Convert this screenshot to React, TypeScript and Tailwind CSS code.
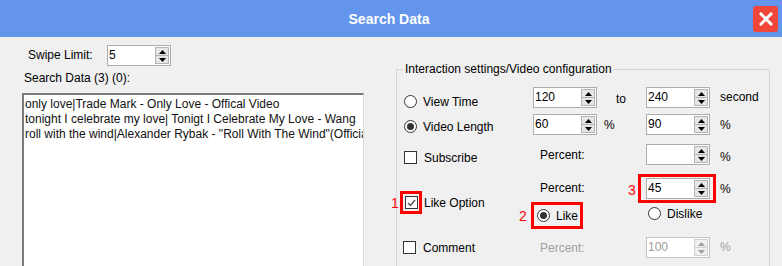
import React from 'react';

const font = "font-['Liberation_Sans',Arial,sans-serif]";

const Spinner = ({ value, disabled }: { value: string; disabled?: boolean }) => {
  return (
    <div className={`w-[64px] h-[21px] flex bg-white border ${disabled ? 'border-[#c4c4c4]' : 'border-[#acacac]'}`}>
      <div className={`flex-1 pl-[1px] text-[12px] leading-[18px] ${disabled ? 'text-[#9d9d9d]' : 'text-black'}`}>{value}</div>
      <div className={`w-[14px] my-[1px] mr-[1px] flex flex-col border ${disabled ? 'border-[#d0d0d0] bg-[#f0f0f0]' : 'border-[#b4b4b4] bg-[#e6e6e6]'}`}>
        <div className={`flex-1 flex items-center justify-center border-b ${disabled ? 'border-[#d0d0d0]' : 'border-[#b4b4b4]'}`}>
          <svg width="7" height="4" viewBox="0 0 7 4">
            <path d="M3.5 0 L7 4 L0 4 Z" fill={disabled ? '#a0a0a0' : '#000'} />
          </svg>
        </div>
        <div className="flex-1 flex items-center justify-center">
          <svg width="7" height="4" viewBox="0 0 7 4">
            <path d="M0 0 L7 0 L3.5 4 Z" fill={disabled ? '#a0a0a0' : '#000'} />
          </svg>
        </div>
      </div>
    </div>
  );
};

const Radio = ({ label, checked }: { label: string; checked?: boolean }) => (
  <div className="flex items-center h-[15px] gap-[6px]">
    <div className="w-[13px] h-[13px] rounded-full border border-[#333] bg-white flex items-center justify-center">
      {checked && <div className="w-[7px] h-[7px] rounded-full bg-[#333]" />}
    </div>
    <span className="text-[12px] leading-[14px] text-black">{label}</span>
  </div>
);

const CheckBox = ({ checked }: { checked?: boolean }) => (
  <div className="w-[13px] h-[13px] border border-[#333] bg-white flex items-center justify-center">
    {checked && (
      <svg width="9" height="8" viewBox="0 0 9 8">
        <path d="M1 4 L3.5 6.5 L8 1" stroke="#555" strokeWidth="1.5" fill="none" />
      </svg>
    )}
  </div>
);

const Label = ({ children, className = '' }: { children: React.ReactNode; className?: string }) => (
  <span className={`block text-[12px] leading-[14px] ${className}`}>{children}</span>
);

const App = () => {
  return (
    <div className={`w-[782px] h-[266px] overflow-hidden bg-[#f0f0f0] ${font} text-black`}>
      {/* title bar */}
      <div className="h-[37px] bg-[#6495ed] flex items-center">
        <div className="flex-1" />
        <div className="text-white font-bold text-[14px] leading-[16px]">Search Data</div>
        <div className="flex-1 flex justify-end pr-[4px]">
          <div className="w-[25px] h-[26px] rounded-[3px] bg-[#f2463a] flex items-center justify-center">
            <svg width="14" height="14" viewBox="0 0 14 14">
              <path d="M2 2 L12 12 M12 2 L2 12" stroke="#fff" strokeWidth="3" strokeLinecap="square" />
            </svg>
          </div>
        </div>
      </div>

      <div className="flex">
        {/* left side */}
        <div className="w-[364px] pl-[22px] pt-[8px]">
          <div className="flex h-[21px]">
            <Label className="ml-[6px] w-[79px] mt-[3px]">Swipe Limit:</Label>
            <Spinner value="5" />
          </div>
          <Label className="ml-[2px] mt-[5px]">Search Data (3) (0):</Label>
          <div className="mt-[8px] w-[342px] h-[200px] bg-white border-t-2 border-l-2 border-t-[#7a7a7a] border-l-[#7a7a7a] border-r border-b border-r-[#dcdcdc] border-b-[#dcdcdc] pl-[1px] pt-[2px] overflow-hidden">
            <div className="text-[12px] leading-[15px] whitespace-nowrap text-[#111]">only love|Trade Mark - Only Love - Offical Video</div>
            <div className="text-[12px] leading-[15px] whitespace-nowrap text-[#111]">tonight I celebrate my love| Tonigt I Celebrate My Love - Wang</div>
            <div className="text-[12px] leading-[15px] whitespace-nowrap text-[#111]">roll with the wind|Alexander Rybak - "Roll With The Wind"(Official Video)</div>
          </div>
        </div>

        {/* right side */}
        <div className="ml-[32px] mt-[25px]">
          <fieldset className="w-[374px] h-[220px] border border-[#d5d5d5] m-0 p-0">
            <legend className="ml-[6px] px-[2px] text-[12px] leading-[14px]">Interaction settings/Video configuration</legend>

            <div className="pt-[11px]">
              {/* view time */}
              <div className="flex h-[27px]">
                <div className="w-[136px] pl-[7px] pt-[7px]">
                  <Radio label="View Time" />
                </div>
                <Spinner value="120" />
                <div className="w-[49px] pl-[19px] pt-[5px]"><Label>to</Label></div>
                <Spinner value="240" />
                <div className="pl-[10px] pt-[3px]"><Label>second</Label></div>
              </div>

              {/* video length */}
              <div className="flex h-[30px]">
                <div className="w-[136px] pl-[7px] pt-[5px]">
                  <Radio label="Video Length" checked />
                </div>
                <Spinner value="60" />
                <div className="w-[49px] pl-[7px] pt-[4px]"><Label>%</Label></div>
                <Spinner value="90" />
                <div className="pl-[10px] pt-[4px]"><Label>%</Label></div>
              </div>

              {/* subscribe */}
              <div className="flex h-[34px]">
                <div className="w-[136px] pl-[7px] pt-[7px] flex gap-[7px]">
                  <CheckBox />
                  <Label>Subscribe</Label>
                </div>
                <div className="w-[64px] pl-[7px] pt-[4px]"><Label>Percent:</Label></div>
                <div className="w-[49px]" />
                <Spinner value="" />
                <div className="pl-[10px] pt-[6px]"><Label>%</Label></div>
              </div>

              {/* like option */}
              <div className="flex h-[59px]">
                <div className="w-[136px] pl-[3px] pt-[13px] flex items-center self-start">
                  <span className="-ml-[9px] w-[9px] text-[14px] leading-[16px] text-[#ff0000]">1</span>
                  <div className="border-[3px] border-[#ff0000] pl-[2px] pr-[1px] py-[2px]">
                    <CheckBox checked />
                  </div>
                  <Label className="ml-[2px]">Like Option</Label>
                </div>
                <div className="w-[64px] flex flex-col">
                  <Label className="pl-[7px] pt-[3px]">Percent:</Label>
                  <div className="flex items-center -ml-[14px] mt-[7px]">
                    <span className="w-[12px] text-[14px] leading-[16px] text-[#ff0000]">2</span>
                    <div className="border-[3px] border-[#ff0000] pl-[3px] pr-[2px] py-[3px]">
                      <Radio label="Like" checked />
                    </div>
                  </div>
                </div>
                <div className="w-[49px] pl-[31px] pt-[4px]">
                  <span className="block text-[14px] leading-[16px] text-[#ff0000]">3</span>
                </div>
                <div className="w-[64px] flex flex-col">
                  <div className="-ml-[8px] -mt-[4px] w-[78px] border-[3px] border-[#ff0000] pl-[5px] pr-[3px] py-[1px]">
                    <Spinner value="45" />
                  </div>
                  <div className="pl-[2px] mt-[3px]">
                    <Radio label="Dislike" />
                  </div>
                </div>
                <div className="pl-[10px] pt-[4px]"><Label>%</Label></div>
              </div>

              {/* comment */}
              <div className="flex h-[30px]">
                <div className="w-[136px] pl-[6px] pt-[4px] flex gap-[7px]">
                  <CheckBox />
                  <Label>Comment</Label>
                </div>
                <div className="w-[64px] pl-[7px] pt-[4px]"><Label className="text-[#a0a0a0]">Percent:</Label></div>
                <div className="w-[49px]" />
                <Spinner value="100" disabled />
                <div className="pl-[10px] pt-[3px]"><Label className="text-[#a0a0a0]">%</Label></div>
              </div>
            </div>
          </fieldset>
        </div>
      </div>
    </div>
  );
};

export default App;
